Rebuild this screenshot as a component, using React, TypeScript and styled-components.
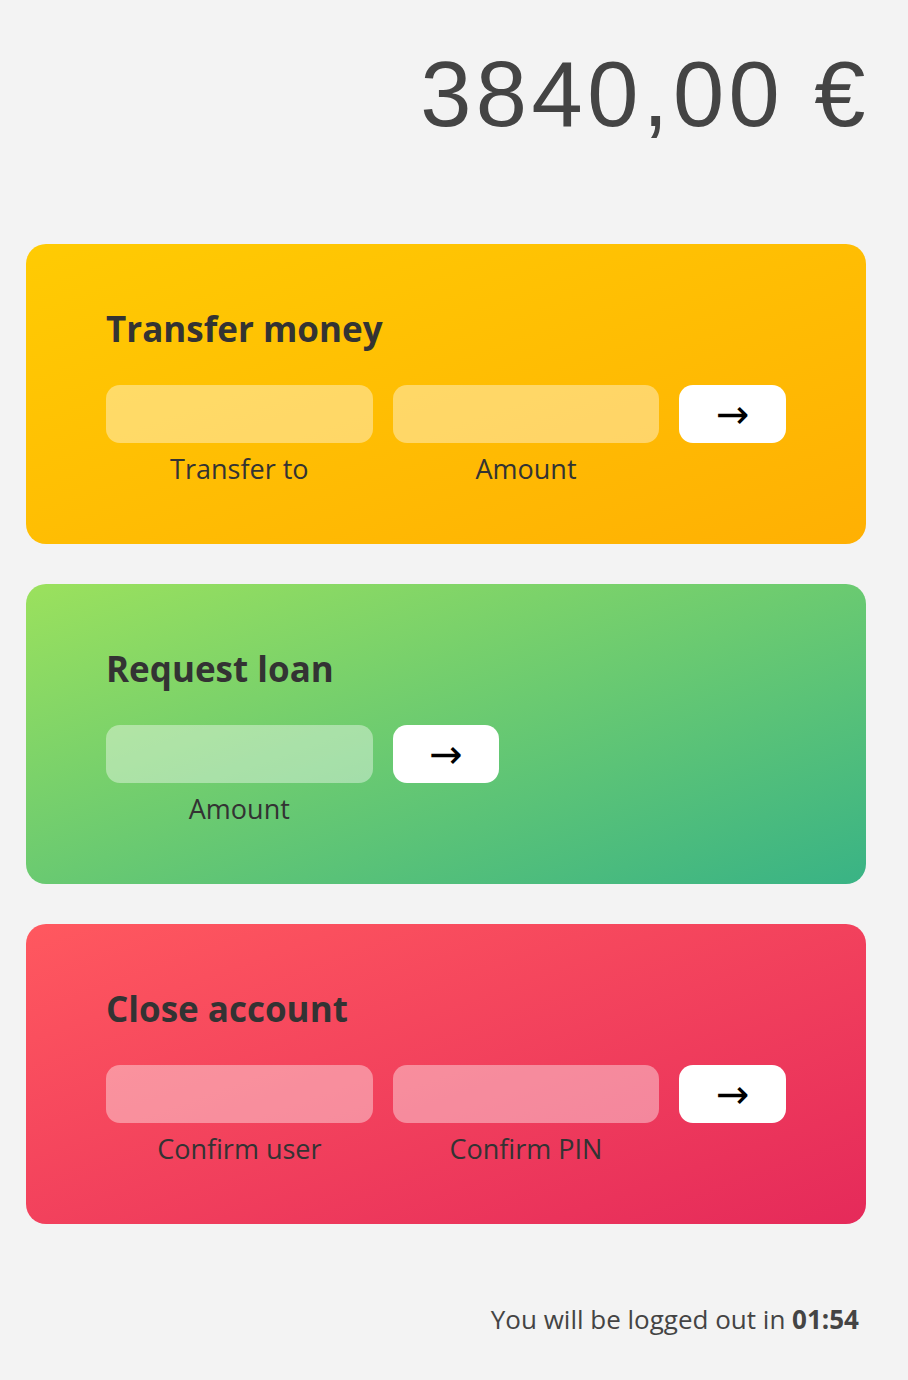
import styled, { createGlobalStyle } from 'styled-components';

const GlobalStyle = createGlobalStyle`
  html, body {
    margin: 0;
    padding: 0;
    background: #f3f3f3;
  }
  body {
    font-family: "Open Sans", "Noto Sans", sans-serif;
    color: #444;
  }
  * { box-sizing: border-box; }
`;

const Page = styled.main`
  width: 908px;
  padding: 0 42px 40px 26px;
  display: flex;
  flex-direction: column;
`;

const Balance = styled.div`
  margin-top: 48px;
  margin-right: -4px;
  align-self: flex-end;
  font-family: "Liberation Sans", Arial, sans-serif;
  font-size: 92px;
  line-height: 1;
  letter-spacing: 4.5px;
  color: #444;
`;

const Operations = styled.section`
  margin-top: 104px;
  display: flex;
  flex-direction: column;
  gap: 40px;
`;

type Kind = 'transfer' | 'loan' | 'close';

const GRADIENTS: Record<Kind, string> = {
  transfer: 'linear-gradient(to top left, #ffb003, #ffcb03)',
  loan: 'linear-gradient(to top left, #39b385, #9be15d)',
  close: 'linear-gradient(to top left, #e52a5a, #ff585f)',
};

const Card = styled.div<{ $kind: Kind }>`
  height: 300px;
  border-radius: 20px;
  padding: 67px 80px 0;
  background-image: ${(p) => GRADIENTS[p.$kind]};
  color: #333;
`;

const Title = styled.h2`
  margin: 0 0 39px;
  font-size: 35px;
  line-height: 1;
  font-weight: 700;
  color: #333;
`;

const Form = styled.form<{ $cols: string }>`
  display: grid;
  grid-template-columns: ${(p) => p.$cols};
  grid-template-rows: 58px auto;
  column-gap: 20px;
  row-gap: 12px;
`;

const Input = styled.input`
  width: 100%;
  height: 58px;
  border: none;
  border-radius: 14px;
  background-color: rgba(255, 255, 255, 0.4);
  font-family: inherit;
  font-size: 30px;
  text-align: center;
  color: #333;
  outline: none;
`;

const Button = styled.button`
  height: 58px;
  border: none;
  border-radius: 14px;
  background-color: #fff;
  font-family: "DejaVu Sans", sans-serif;
  font-size: 40px;
  line-height: 1;
  color: #000;
  padding: 0;
  cursor: pointer;
`;

const Label = styled.label<{ $col: number }>`
  grid-row: 2;
  grid-column: ${(p) => p.$col};
  font-size: 27px;
  line-height: 1;
  text-align: center;
  color: #333;
`;

const Footer = styled.p`
  margin: 82px 0 0;
  padding-right: 7px;
  text-align: right;
  font-size: 26px;
  line-height: 1;
  color: #444;

  strong { font-weight: 700; }
`;

export default function App() {
  return (
    <>
      <GlobalStyle />
      <Page>
        <Balance>3840,00 €</Balance>
        <Operations>
          <Card $kind="transfer">
            <Title>Transfer money</Title>
            <Form $cols="2.5fr 2.5fr 1fr" onSubmit={(e) => e.preventDefault()}>
              <Input type="text" />
              <Input type="number" />
              <Button>→</Button>
              <Label $col={1}>Transfer to</Label>
              <Label $col={2}>Amount</Label>
            </Form>
          </Card>
          <Card $kind="loan">
            <Title>Request loan</Title>
            <Form $cols="2.5fr 1fr 2.5fr" onSubmit={(e) => e.preventDefault()}>
              <Input type="number" />
              <Button>→</Button>
              <Label $col={1}>Amount</Label>
            </Form>
          </Card>
          <Card $kind="close">
            <Title>Close account</Title>
            <Form $cols="2.5fr 2.5fr 1fr" onSubmit={(e) => e.preventDefault()}>
              <Input type="text" />
              <Input type="password" />
              <Button>→</Button>
              <Label $col={1}>Confirm user</Label>
              <Label $col={2}>Confirm PIN</Label>
            </Form>
          </Card>
        </Operations>
        <Footer>
          You will be logged out in <strong>01:54</strong>
        </Footer>
      </Page>
    </>
  );
}
